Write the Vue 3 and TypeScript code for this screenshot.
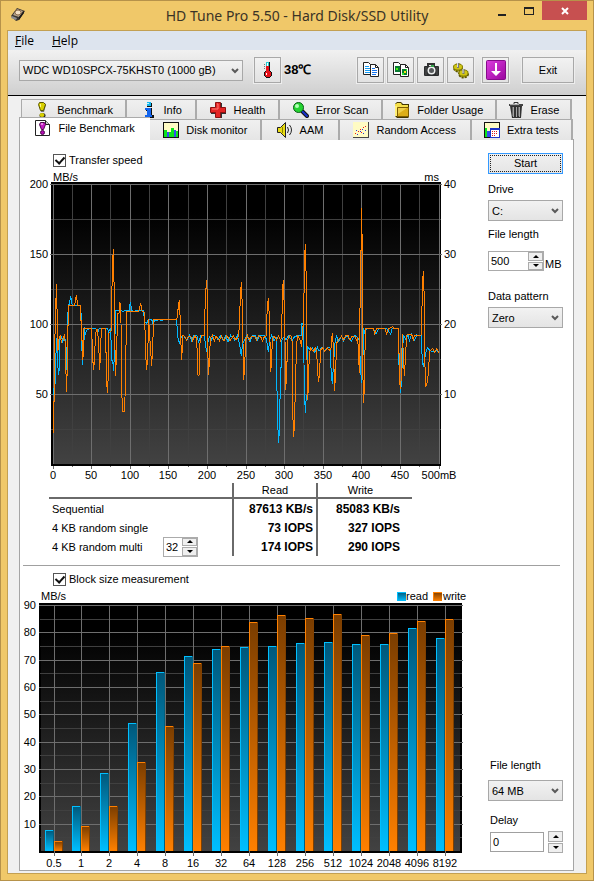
<script setup lang="ts">
import { computed, ref } from 'vue'

type Tab = { id: string; label: string; width: number }

const backTabs: Tab[] = [
  { id: 'bench', label: 'Benchmark', width: 106 },
  { id: 'info', label: 'Info', width: 70 },
  { id: 'health', label: 'Health', width: 83 },
  { id: 'scan', label: 'Error Scan', width: 102 },
  { id: 'folder', label: 'Folder Usage', width: 114 },
  { id: 'erase', label: 'Erase', width: 75 },
]
const frontTabs: Tab[] = [
  { id: 'file', label: 'File Benchmark', width: 131 },
  { id: 'disk', label: 'Disk monitor', width: 112 },
  { id: 'aam', label: 'AAM', width: 77 },
  { id: 'random', label: 'Random Access', width: 132 },
  { id: 'extra', label: 'Extra tests', width: 101 },
]
const tabRows = [backTabs, frontTabs]
const activeTab = ref('file')
const columns = (row: Tab[]) => row.map((t) => `${t.width}fr`).join(' ')

const showTransfer = ref(true)
const showBlocks = ref(true)
const queueDepth = ref('32')
const fileLength = ref('500')
const delay = ref('0')

/* Transfer chart geometry */
const plotX = 33
const plotY = 17
const xTicks = Array.from({ length: 21 }, (_, i) => ({
  x: Math.floor(plotX + i * 19.3),
  major: i % 2 === 0,
  label: i % 2 ? '' : `${i * 25}${i === 20 ? 'mB' : ''}`,
}))
const yTicks = Array.from({ length: 9 }, (_, i) => ({
  y: plotY + i * 35,
  major: i % 2 === 0,
  left: i % 2 || i === 8 ? '' : String(200 - i * 25),
  right: i % 2 || i === 8 ? '' : String(40 - i * 5),
}))

/* Traces are sampled on a grid of three steps per chart pixel. */
const readTrace =
  '100,645 100,630 106,610 109,475 112,490 113,555 116,584 119,555 120,475 124,470 128,486 134,468 138,500 140,570 142,440 145,376 148,372 152,349 157,376 182,376 184,420 187,556 191,500 194,440 195,465 200,450 210,446 228,446 233,458 237,446 263,446 266,455 272,446 275,540 278,540 281,572 283,520 286,436 287,392 305,392 309,395 313,392 327,392 331,366 335,392 345,394 350,391 370,392 374,425 380,430 385,418 395,418 400,435 404,419 410,423 415,419 425,421 430,419 470,419 473,470 478,490 484,470 490,466 500,480 508,466 515,482 522,466 530,466 536,485 543,466 553,466 556,490 560,515 564,485 568,470 574,480 580,466 588,470 594,480 602,466 610,482 617,468 624,486 632,466 644,480 652,466 659,495 662,515 664,527 668,490 674,478 680,466 690,485 696,468 706,466 712,480 718,466 734,466 740,480 745,516 749,480 755,466 762,482 768,470 770,548 772,708 776,788 779,730 781,590 784,550 786,480 792,470 798,480 805,466 816,482 824,470 835,466 844,466 846,430 848,430 850,440 852,550 853,625 856,698 859,645 862,645 863,500 872,512 877,502 884,516 892,502 897,514 905,502 914,512 922,502 930,504 934,583 937,612 940,560 945,490 950,466 955,485 965,468 970,484 980,466 994,484 1003,466 1010,470 1018,480 1022,572 1025,608 1028,570 1031,445 1034,458 1040,446 1060,446 1068,463 1076,446 1100,446 1112,462 1116,446 1134,446 1138,590 1142,638 1145,590 1150,466 1158,480 1164,463 1168,482 1175,463 1184,480 1190,465 1203,466 1207,540 1210,560 1213,545 1217,520 1222,503 1230,512 1240,515 1250,510 1257,518'
const writeTrace =
  '100,758 100,665 103,665 103,510 106,440 109,312 110,365 112,405 114,512 117,478 121,465 124,485 128,475 134,463 137,522 139,635 141,600 142,435 145,435 146,376 164,376 169,345 173,376 182,376 182,420 185,420 187,540 190,525 192,446 215,446 218,535 221,570 223,540 227,458 232,446 236,490 239,570 241,530 244,446 257,446 259,585 262,638 265,585 266,460 274,452 275,380 277,265 280,207 282,305 284,380 284,425 286,587 289,540 293,400 297,400 300,367 303,430 305,610 307,694 314,694 316,610 319,440 320,395 332,393 356,393 362,370 366,393 372,395 374,420 378,540 380,570 383,530 386,418 391,500 395,557 398,500 401,418 470,418 473,403 475,376 478,361 480,405 482,470 485,540 487,500 488,466 495,470 500,480 505,470 512,468 518,482 524,468 530,475 534,585 537,585 540,490 544,468 553,466 556,350 560,300 562,350 563,480 565,585 568,550 571,475 577,466 583,482 588,468 598,482 604,468 612,482 620,466 630,482 640,468 648,480 655,470 658,440 661,350 664,306 667,380 669,490 671,600 674,560 677,478 682,466 688,480 694,468 703,468 710,480 716,468 722,470 728,484 733,470 738,468 742,382 745,354 748,410 751,520 752,575 755,540 757,480 762,468 770,480 776,468 782,482 785,470 787,342 790,300 793,390 795,480 797,630 800,580 803,480 808,466 814,468 817,490 818,695 821,770 824,720 826,620 830,490 833,468 840,480 845,500 848,440 851,440 853,250 856,192 859,310 861,540 863,660 865,620 868,520 872,504 880,515 886,504 890,515 893,580 896,605 899,570 902,510 908,504 915,514 922,504 928,512 934,502 934,490 937,460 940,500 943,600 944,632 946,590 950,490 955,480 965,468 970,480 976,468 984,466 990,480 996,468 1004,468 1010,480 1013,470 1017,555 1019,580 1021,210 1024,210 1025,84 1027,232 1028,560 1031,670 1033,615 1036,460 1037,446 1060,446 1064,462 1070,446 1095,446 1100,462 1105,446 1118,440 1122,446 1136,446 1138,590 1141,628 1144,590 1147,463 1153,587 1156,540 1160,465 1175,463 1180,480 1184,465 1203,465 1205,440 1207,322 1210,273 1213,360 1215,560 1217,622 1222,605 1225,580 1229,515 1238,505 1244,516 1250,507 1257,517'

const results = [
  { name: 'Sequential', read: '87613 KB/s', write: '85083 KB/s' },
  { name: '4 KB random single', read: '73 IOPS', write: '327 IOPS' },
  { name: '4 KB random multi', read: '174 IOPS', write: '290 IOPS', depth: true },
]

/* Block size chart: MB/s per block size in KB */
const blocks: [string, number, number][] = [
  ['0.5', 7.6, 3.6], ['1', 16.6, 9.1], ['2', 28.4, 16.6], ['4', 46.7, 32.4],
  ['8', 65.4, 45.9], ['16', 71.2, 68.7], ['32', 73.8, 74.9], ['64', 74.5, 83.7],
  ['128', 74.9, 86.3], ['256', 76, 85.1], ['512', 76.3, 86.6], ['1024', 75.6, 78.9],
  ['2048', 75.6, 79.7], ['4096', 81.5, 84], ['8192', 77.8, 84.8],
]
const base = 265
const level = (v: number) => Math.round(base - v * 2.733)
const bars = computed(() =>
  blocks.map(([label, read, write], i) => ({
    label,
    x: Math.floor(34 + i * 27.935),
    read: level(read),
    write: level(write),
  })),
)
const levels = Array.from({ length: 18 }, (_, i) => ({
  y: level((i + 1) * 5),
  major: i % 2 === 1,
  label: i % 2 ? String((i + 1) * 5) : '',
}))
</script>

<template>
  <div class="window">
    <header class="titlebar">
      <svg class="app-icon" viewBox="0 0 16 16" width="16" height="16">
        <path d="M1 9 7 1l8 3-6 9-3 1z" fill="#3a3530" />
        <path d="M3 8 7 2l6 2-4 6z" fill="#b9a68e" />
        <ellipse cx="8" cy="5.500" rx="3" ry="2.500" fill="#f3e0c6" stroke="#8a6a4a" />
        <path d="m2 9 5 2-1 2-5-2z" fill="#8d8d90" />
        <path d="m9 10 5-6v2l-5 7z" fill="#1e1b1a" />
      </svg>
      <h1>HD Tune Pro 5.50 - Hard Disk/SSD Utility</h1>
      <div class="captions">
        <button class="cap" aria-label="Minimize"><svg viewBox="0 0 12 12" width="12" height="12"><path d="M2 9h8v2H2z" fill="#222" /></svg></button>
        <button class="cap" aria-label="Maximize"><svg viewBox="0 0 12 12" width="12" height="12"><path d="M1 2h10v8H1zM2 4v5h8V4z" fill="#222" fill-rule="evenodd" /></svg></button>
        <button class="cap close" aria-label="Close"><svg viewBox="0 0 12 12" width="12" height="12"><path d="m3 3 6 6M9 3 3 9" stroke="#fff" stroke-width="2" /></svg></button>
      </div>
    </header>

    <main class="client">
      <nav class="menu">
        <a href="#file"><u>F</u>ile</a>
        <a href="#help"><u>H</u>elp</a>
      </nav>

      <div class="toolbar">
        <div class="combo device">
          <select aria-label="Drive to test"><option>WDC WD10SPCX-75KHST0 (1000 gB)</option></select>
          <svg class="chev" viewBox="0 0 8 6" width="8" height="6"><path d="m1 1 3 3 3-3" /></svg>
        </div>
        <button class="tool" aria-label="Temperature">
          <svg viewBox="0 0 18 18" width="18" height="18" shape-rendering="crispEdges">
            <path d="M7 1h4v9h1v1h1v4h-1v1h-1v1H7v-1H6v-1H5v-4h1v-1h1z" fill="#111" />
            <path d="M7 1h3v9h1v1h1v4h-1v1H7v-1H6v-4h1z" fill="#e8101a" />
            <path d="M7 1h3v4H7z" fill="#26cfd4" />
            <path d="M8 2h1v3H8zM7 12h1v2H7z" fill="#fff" />
            <path d="M5 3h1v1H5zM5 5h1v1H5zM5 7h1v1H5z" fill="#777" />
          </svg>
        </button>
        <strong class="temp">38℃</strong>
        <div class="tools">
          <button class="tool" aria-label="Copy text">
            <svg viewBox="0 0 18 18" width="18" height="18">
              <path d="M1.500 1.500h5l3 3v9h-8z" fill="#fff" stroke="#222" />
              <path d="M3 5.500h4M3 7.500h5M3 9.500h5M3 11.500h5" stroke="#159bf2" />
              <path d="M8.500 3.500h5l3 3v9h-8z" fill="#fff" stroke="#222" />
              <path d="M10 7.500h3M10 9.500h5M10 11.500h5M10 13.500h4" stroke="#1674ee" />
              <path d="M13.500 3.500v3h3" fill="none" stroke="#222" />
            </svg>
          </button>
          <button class="tool" aria-label="Copy screenshot">
            <svg viewBox="0 0 18 18" width="18" height="18">
              <path d="M1.500 1.500h5l3 3v9h-8z" fill="#fff" stroke="#222" />
              <path d="M3 5h5v6H3z" fill="#087b32" /><path d="M4 7h2v2H4z" fill="#4af014" />
              <path d="M8.500 3.500h5l3 3v9h-8z" fill="#fff" stroke="#222" />
              <path d="M10 8h5v6h-5z" fill="#08802f" /><path d="M12 10h2v2h-2z" fill="#ffe51c" /><path d="M10 12h2v2h-2zM14 8h1v2h-1z" fill="#2ce82b" />
              <path d="M13.500 3.500v3h3" fill="none" stroke="#222" />
            </svg>
          </button>
          <button class="tool" aria-label="Save screenshot">
            <svg viewBox="0 0 18 18" width="18" height="18">
              <path d="M6 5V3h6v2" fill="none" stroke="#333" stroke-width="2" />
              <rect x="2" y="5" width="15" height="10" rx="1" fill="#2b2d2e" />
              <path d="M4 6v8M15 6v8" stroke="#555" />
              <circle cx="9.500" cy="9.500" r="4" fill="#eef0f0" /><circle cx="9.500" cy="9.500" r="2.500" fill="#56595b" />
              <path d="M9 4h3v2H9z" fill="#35a44b" />
            </svg>
          </button>
          <button class="tool" aria-label="Options">
            <svg viewBox="0 0 18 18" width="18" height="18">
              <g stroke="#5c5600" stroke-width="1">
                <ellipse cx="6" cy="7" rx="4" ry="3.500" fill="#b8ae08" stroke-width="2" stroke-dasharray="2 1" />
                <ellipse cx="6" cy="6" rx="4.500" ry="3" fill="#d0c614" stroke="#8a8305" />
                <ellipse cx="11.500" cy="13" rx="4.500" ry="3.500" fill="#b8ae08" stroke-width="2" stroke-dasharray="2 1" />
                <ellipse cx="11.500" cy="12" rx="4.500" ry="3" fill="#d0c614" stroke="#8a8305" />
              </g>
              <path d="M6 2v5M11.500 8v5" stroke="#777" stroke-width="2" /><path d="M5.500 2v4M11 8v4" stroke="#ddd" />
            </svg>
          </button>
          <button class="tool minimize" aria-label="Minimize to tray">
            <svg viewBox="0 0 20 20" width="20" height="20">
              <defs><linearGradient id="tray" x1="0" y1="0" x2="1" y2="1"><stop offset="0" stop-color="#dd3ee0" /><stop offset="1" stop-color="#9a069e" /></linearGradient></defs>
              <rect x=".5" y=".5" width="19" height="19" rx="1" fill="url(#tray)" stroke="#850b8a" />
              <path d="M9 3h2v8h4l-5 5-5-5h4z" fill="#fff" />
            </svg>
          </button>
          <button class="exit">Exit</button>
        </div>
      </div>

      <div class="book">
        <div
          v-for="(row, r) in tabRows"
          :key="r"
          class="tabs"
          :class="{ back: r === 0 }"
          role="tablist"
          :style="{ gridTemplateColumns: columns(row) }"
        >
          <button
            v-for="t in row"
            :key="t.id"
            class="tab"
            :class="{ active: t.id === activeTab }"
            role="tab"
            :aria-selected="t.id === activeTab"
            @click="activeTab = t.id"
          >
            <svg viewBox="0 0 16 16" width="16" height="16">
              <g v-if="t.id === 'bench'">
                <path d="M6 1h5l1 2-2 7H7L5 3z" fill="#777" /><path d="M5.500.500h4l2 2-2 6h-3l-2-6z" fill="#d8d000" stroke="#5a5600" />
                <path d="M6.500 2v3" stroke="#fff88a" /><ellipse cx="8.500" cy="13.500" rx="3" ry="2.500" fill="#222" /><ellipse cx="8" cy="13" rx="2.500" ry="2" fill="#d8d000" />
              </g>
              <g v-else-if="t.id === 'info'">
                <path d="M6 1h5v4H6zM5 6h6v7h2v3H5v-3h2V9H5z" fill="#111" />
                <path d="M6 0h4v4H6z" fill="#16b8ee" /><path d="M4 6h6v7h1v2H4v-2h2V8H4z" fill="#1264ee" /><path d="M6 1h2v1H6z" fill="#bdf3ff" />
              </g>
              <g v-else-if="t.id === 'health'">
                <path d="M6 1h6v5h4v6h-4v4H6v-4H1V7h5z" fill="#333" /><path d="M5.500.500h5v5h5v5h-5v5h-5v-5h-5v-5h5z" fill="#e42424" stroke="#8c1111" />
                <path d="M7 2h1v5H2" fill="none" stroke="#ff7b76" />
              </g>
              <g v-else-if="t.id === 'scan'">
                <path d="m9 9 5 5" stroke="#111" stroke-width="4" stroke-linecap="round" /><path d="m9 9 5 5" stroke="#1833c8" stroke-width="2" stroke-linecap="round" />
                <circle cx="5.500" cy="5.500" r="5" fill="#25d432" stroke="#085e14" /><circle cx="4" cy="4" r="2" fill="#b4ffb6" />
              </g>
              <g v-else-if="t.id === 'folder'">
                <path d="M1 2 3 0h4l2 2h6v13l-1 1H3l-2-2z" fill="#413500" /><path d="M1 2h1l1-1h4l1 2h6v3H1z" fill="#f5df4a" />
                <path d="M1 4h2v10H1z" fill="#ffef76" /><path d="M3.500 5.500h11v9h-11z" fill="#dcae18" stroke="#7c5c00" /><path d="M4 6h9L4 12z" fill="#efd04b" />
              </g>
              <g v-else-if="t.id === 'erase'">
                <path d="M2 4h12l-1 12H4z" fill="#333" /><path d="M5.500 5v10M8.500 5v10M11.500 5v10" stroke="#a6a6a6" />
                <path d="M4.500 5v9M10.500 5v9" stroke="#666" /><path d="M1 2h14v2H1z" fill="#444" /><path d="M6 2V.500h4V2" fill="none" stroke="#333" /><path d="M2 2.500h9" stroke="#aaa" />
              </g>
              <g v-else-if="t.id === 'file'">
                <path d="M.500.500h10l4 4v11H.500z" fill="#fff" stroke="#222" /><path d="M10.500.500v4h4" fill="#ccc" stroke="#222" />
                <path d="M5.500 2.500h4l1 2-2 5h-2l-2-5z" fill="#c51ac5" stroke="#4b064b" /><path d="M6 4h2" stroke="#fff" /><circle cx="7.500" cy="12.500" r="2" fill="#b10bb1" stroke="#4b064b" />
              </g>
              <g v-else-if="t.id === 'disk'" shape-rendering="crispEdges">
                <path d="M0 0h16v16H0z" fill="#111" /><path d="M1 1h14v14H1z" fill="#fffbc4" />
                <path d="M1 8h3v7H1zM6 10h2v5H6zM8 6h3v9H8zM13 9h2v6h-2z" fill="#0be51d" /><path d="M4 10h2v5H4zM11 8h2v7h-2z" fill="#374bf0" />
              </g>
              <g v-else-if="t.id === 'aam'">
                <path d="M.500 5.500h3l5-5v15l-5-5h-3z" fill="#e9dc13" stroke="#222" /><path d="M5.500 5v6" stroke="#8b8300" />
                <path d="M10.500 5q2 3 0 6M12.500 3q4 5 0 10" fill="none" stroke="#222" />
              </g>
              <g v-else-if="t.id === 'random'" shape-rendering="crispEdges">
                <path d="M0 0h16v16H0z" fill="#444" /><path d="M0 0h15v15H0z" fill="#fffbc4" />
                <path d="M2 11h1v1H2zM5 9h1v1H5zM8 10h1v1H8zM10 5h1v1h-1zM12 4h1v1h-1zM7 7h1v1H7z" fill="#ef1a1a" />
                <path d="M3 8h1v1H3zM4 12h1v1H4zM7 9h1v1H7zM9 7h1v1H9zM12 8h1v1h-1zM10 11h1v1h-1z" fill="#2635df" />
              </g>
              <g v-else shape-rendering="crispEdges">
                <path d="M0 0h16v16H0z" fill="#111" /><path d="M1 1h14v14H1z" fill="#fffbc4" /><path d="M1 6h2v9H1z" fill="#0be51d" /><path d="M3 9h3v6H3z" fill="#374bf0" />
                <path d="M6 6h10v10H6z" fill="#1f35c8" /><path d="M7 8h8v7H7z" fill="#fff" />
                <path d="M8 9h1v1H8zM10 9h1v1h-1zM12 9h1v1h-1zM8 11h1v1H8zM10 11h1v1h-1zM12 11h1v1h-1zM8 13h1v1H8zM10 13h1v1h-1z" fill="#e01b1b" />
              </g>
            </svg>
            <span>{{ t.label }}</span>
          </button>
        </div>

        <div class="page">
          <section class="panel">
            <div class="graph">
              <label class="check"><input v-model="showTransfer" type="checkbox" />Transfer speed</label>
              <svg class="chart" viewBox="0 0 450 315">
                <defs>
                  <linearGradient id="plot" x1="0" y1="0" x2="0" y2="1"><stop offset=".1" stop-color="#000" /><stop offset="1" stop-color="#424242" /></linearGradient>
                </defs>
                <text x="33" y="14">MB/s</text>
                <text x="419" y="14" text-anchor="end">ms</text>
                <g shape-rendering="crispEdges">
                  <rect x="31" y="15" width="390" height="284" fill="#000" />
                  <rect x="33" y="17" width="386" height="280" fill="url(#plot)" />
                  <rect v-for="t in yTicks.slice(0, 8)" :key="t.y" :x="t.major ? 30 : 31" :y="t.y" :width="t.major ? 392 : 390" height="1" :class="t.major ? 'major' : 'minor'" />
                  <rect v-for="t in xTicks" :key="t.x" :x="t.x" y="17" width="1" height="280" :class="t.major ? 'major' : 'minor'" />
                  <rect v-for="t in xTicks" :key="t.x" :x="t.x" y="299" width="1" :height="t.major ? 3 : 1" class="major" />
                  <rect v-for="t in yTicks.slice(0, 8).filter((k) => k.major)" :key="t.y" x="30" :y="t.y" width="392" height="1" class="major" />
                  <svg v-if="showTransfer" x="0" y="13" width="450" height="300" viewBox="0 0 1350 900">
                    <polyline :points="readTrace" fill="none" stroke="#00b7ff" stroke-width="3" />
                    <polyline :points="writeTrace" fill="none" stroke="#ff8000" stroke-width="3" />
                  </svg>
                </g>
                <text v-for="t in yTicks" :key="t.y" x="28" :y="t.y + 4" text-anchor="end">{{ t.left }}</text>
                <text v-for="t in yTicks" :key="t.y" x="424" :y="t.y + 4">{{ t.right }}</text>
                <text v-for="t in xTicks" :key="t.x" :x="t.x" y="312" text-anchor="middle">{{ t.label }}</text>
              </svg>
              <table class="results">
                <thead>
                  <tr><th class="name"></th><th>Read</th><th>Write</th></tr>
                </thead>
                <tbody>
                  <tr v-for="row in results" :key="row.name">
                    <td class="name">
                      <div class="cell">
                        <span>{{ row.name }}</span>
                        <span v-if="row.depth" class="spin depth">
                          <input v-model="queueDepth" type="text" aria-label="Queue depth" />
                          <span class="steps"><button aria-label="More"><i class="up"></i></button><button aria-label="Less"><i class="down"></i></button></span>
                        </span>
                      </div>
                    </td>
                    <td>{{ row.read }}</td>
                    <td>{{ row.write }}</td>
                  </tr>
                </tbody>
              </table>
            </div>
            <aside class="side">
              <button class="start"><span>Start</span></button>
              <div class="field">
                <label for="drive">Drive</label>
                <div class="combo">
                  <select id="drive"><option>C:</option></select>
                  <svg class="chev" viewBox="0 0 8 6" width="8" height="6"><path d="m1 1 3 3 3-3" /></svg>
                </div>
              </div>
              <div class="field length">
                <label for="len">File length</label>
                <div class="with-unit">
                  <span class="spin">
                    <input id="len" v-model="fileLength" type="text" />
                    <span class="steps"><button aria-label="Longer"><i class="up"></i></button><button aria-label="Shorter"><i class="down"></i></button></span>
                  </span>
                  <span class="unit">MB</span>
                </div>
              </div>
              <div class="field">
                <label for="pattern">Data pattern</label>
                <div class="combo">
                  <select id="pattern"><option>Zero</option></select>
                  <svg class="chev" viewBox="0 0 8 6" width="8" height="6"><path d="m1 1 3 3 3-3" /></svg>
                </div>
              </div>
            </aside>
          </section>

          <hr />

          <section class="panel lower">
            <div class="graph">
              <label class="check"><input v-model="showBlocks" type="checkbox" />Block size measurement</label>
              <svg class="chart" viewBox="0 0 450 283">
                <defs>
                  <linearGradient id="blue" x1="0" y1="0" x2="0" y2="1"><stop offset="0" stop-color="#00577a" /><stop offset="1" stop-color="#00bfff" /></linearGradient>
                  <linearGradient id="orange" x1="0" y1="0" x2="0" y2="1"><stop offset="0" stop-color="#7a3d00" /><stop offset="1" stop-color="#ff8000" /></linearGradient>
                </defs>
                <text x="21" y="14">MB/s</text>
                <g shape-rendering="crispEdges">
                  <rect x="377" y="6" width="9" height="9" fill="url(#blue)" /><path d="M377.500 15V6.500H386" fill="none" stroke="#00bfff" />
                  <rect x="413" y="6" width="9" height="9" fill="url(#orange)" /><path d="M413.500 15V6.500H422" fill="none" stroke="#ff8000" />
                  <rect x="19" y="17" width="423" height="250" fill="#000" />
                  <rect x="21" y="19" width="419" height="246" fill="url(#plot)" />
                  <rect v-for="l in levels" :key="l.y" :x="l.major ? 19 : 20" :y="l.y" :width="l.major ? 424 : 422" height="1" :class="l.major ? 'major' : 'minor'" />
                  <g v-for="b in bars" :key="b.label">
                    <rect :x="b.x" y="19" width="1" height="251" class="major" />
                    <template v-if="showBlocks">
                      <rect :x="b.x - 9" :y="b.read" width="9" :height="base - b.read" fill="url(#blue)" />
                      <path :d="`M${b.x - 9} ${base}V${b.read}h8v1h-7V${base}z`" fill="#00bfff" />
                      <rect :x="b.x - 1" :y="b.read + 1" width="1" :height="base - b.read - 1" fill="#006080" />
                      <rect :x="b.x" :y="b.write" width="9" :height="base - b.write" fill="url(#orange)" />
                      <path :d="`M${b.x} ${base}V${b.write}h8v1h-7V${base}z`" fill="#ff8000" />
                      <rect :x="b.x + 8" :y="b.write + 1" width="1" :height="base - b.write - 1" fill="#804000" />
                    </template>
                  </g>
                </g>
                <text x="386" y="14">read</text>
                <text x="423" y="14">write</text>
                <text v-for="l in levels" :key="l.y" x="16" :y="l.y + 4" text-anchor="end">{{ l.label }}</text>
                <text v-for="b in bars" :key="b.label" :x="b.x" y="281" text-anchor="middle">{{ b.label }}</text>
              </svg>
            </div>
            <aside class="side bottom">
              <div class="field block-length">
                <label for="blen">File length</label>
                <div class="combo">
                  <select id="blen"><option>64 MB</option></select>
                  <svg class="chev" viewBox="0 0 8 6" width="8" height="6"><path d="m1 1 3 3 3-3" /></svg>
                </div>
              </div>
              <div class="field">
                <label for="delay">Delay</label>
                <div class="delay">
                  <input id="delay" v-model="delay" type="text" />
                  <span class="steps"><button aria-label="Longer delay"><i class="up"></i></button><button aria-label="Shorter delay"><i class="down"></i></button></span>
                </div>
              </div>
            </aside>
          </section>
        </div>
      </div>
    </main>
  </div>
</template>

<style>
body {
  margin: 0;
}
</style>

<style scoped>
* {
  box-sizing: border-box;
}
.window {
  font: 11px/14px 'Liberation Sans', sans-serif;
  color: #000;
  background: #f0c869;
  border: 1px solid #b6924a;
  padding: 0 6px 6px;
}
button,
input,
select {
  font: inherit;
  color: inherit;
  margin: 0;
  padding: 0;
  border-radius: 0;
}
svg {
  display: block;
  flex: none;
}
.titlebar {
  display: grid;
  grid-template-columns: 96px 1fr 96px;
  height: 29px;
}
.app-icon {
  margin: 6px 0 0 3px;
}
h1 {
  margin: 0;
  font: 14px/30px 'Noto Sans', sans-serif;
  color: #3a3326;
  text-align: center;
  white-space: nowrap;
  display: flex;
  justify-content: center;
}
.captions {
  display: flex;
  justify-content: flex-end;
}
.cap {
  width: 27px;
  height: 19px;
  border: 0;
  background: none;
  display: flex;
  align-items: center;
  justify-content: center;
  flex: none;
}
.close {
  width: 45px;
  background: #c75050;
}
.client {
  border: 1px solid #c3a052;
  background: #f0f0f0;
}
.menu {
  display: flex;
  gap: 18px;
  height: 19px;
  padding-left: 7px;
  background: #dde4ee;
  font: 12px/20px 'Open Sans', sans-serif;
}
.menu a {
  color: #000;
  text-decoration: none;
}
.toolbar {
  display: flex;
  align-items: center;
  height: 46px;
  padding: 0 12px 5px 11px;
  background: linear-gradient(#f1f1f1, #cfcfcf);
  border-bottom: 1px solid #000;
}
.combo {
  position: relative;
}
.combo select {
  display: block;
  appearance: none;
  width: 100%;
  height: 21px;
  padding-left: 3px;
  border: 1px solid #a8a8a8;
  background: linear-gradient(#f2f2f2, #e4e4e4);
}
.chev {
  position: absolute;
  right: 4px;
  top: 8px;
  pointer-events: none;
}
.chev path {
  fill: none;
  stroke: #5a5a5a;
  stroke-width: 2;
}
.device {
  width: 224px;
}
.tool,
.exit {
  width: 27px;
  height: 26px;
  border: 1px solid #a8a8a8;
  background: linear-gradient(#f2f2f2, #e2e2e2);
  box-shadow: 0 0 0 1px #eee;
  display: flex;
  align-items: center;
  justify-content: center;
}
.device + .tool {
  margin-left: 11px;
}
.temp {
  margin-left: 3px;
  font-size: 13px;
}
.tools {
  display: flex;
  gap: 3px;
  margin-left: auto;
}
.minimize {
  margin-left: 5px;
}
.exit {
  width: 52px;
  margin-left: 10px;
}
.book {
  padding: 3px 12px 2px 11px;
}
.tabs {
  display: grid;
  height: 20px;
  margin-right: 1px;
}
.back {
  margin: 0 2px;
}
.tab {
  display: flex;
  align-items: center;
  justify-content: center;
  gap: 7px;
  border: 1px solid #ababab;
  border-right-width: 2px;
  border-bottom: 0;
  border-left: 0;
  background: linear-gradient(#f0f0f0, #e5e5e5);
  white-space: nowrap;
}
.tab:first-child {
  border-left: 1px solid #ababab;
}
.tab.active {
  position: relative;
  z-index: 1;
  height: 23px;
  margin-top: -2px;
  padding-bottom: 2px;
  background: #fff;
  border-right: 0;
}
.page {
  border: 1px solid #a5a5a5;
  background: #fff;
  padding: 0 10px 0 0;
}
.panel {
  display: flex;
  padding-top: 13px;
}
.graph {
  flex: 1;
  min-width: 0;
  padding-right: 18px;
}
.check {
  display: flex;
  align-items: center;
  gap: 3px;
  height: 14px;
  width: max-content;
  margin-left: 33px;
}
.check input {
  appearance: none;
  width: 13px;
  height: 13px;
  border: 1px solid #555;
  background: #fff;
  display: grid;
  place-items: center;
}
.check input:checked::before {
  content: '';
  width: 4px;
  height: 7px;
  border: solid #111;
  border-width: 0 2px 2px 0;
  transform: translateY(-1px) rotate(42deg);
}
.chart {
  width: 100%;
  height: auto;
  font-size: 11px;
}
.major {
  fill: #6e6e6e;
}
.minor {
  fill: #404040;
}
.results {
  width: 363px;
  margin: 1px 0 0 29px;
  border-collapse: separate;
  border-spacing: 0;
  table-layout: fixed;
}
.results th,
.results td {
  padding: 0 3px 0 0;
  height: 19px;
  border-left: 2px solid #6a6a6a;
  text-align: right;
  font-size: 12px;
  font-weight: bold;
}
.results td:last-child {
  padding-right: 12px;
}
.results th {
  height: 16px;
  padding: 0;
  border-bottom: 2px solid #6a6a6a;
  text-align: center;
  font-size: 11px;
  font-weight: normal;
}
.results th:nth-child(2) {
  width: 84px;
}
.results th:last-child {
  width: 96px;
  padding-right: 9px;
}
.results .name {
  border-left: 0;
  text-align: left;
  font-size: 11px;
  font-weight: normal;
}
.cell {
  display: flex;
  align-items: center;
  height: 19px;
  padding-left: 3px;
}
.spin {
  display: flex;
  width: 56px;
  height: 20px;
  border: 1px solid #ababab;
  background: #fff;
}
.spin input {
  flex: 1;
  min-width: 0;
  border: 0;
  background: none;
  padding-left: 2px;
}
.depth {
  width: 35px;
  margin-left: auto;
  margin-right: 31px;
}
.steps {
  display: grid;
  grid-template-rows: 1fr 1fr;
  gap: 1px;
  width: 15px;
}
.steps button {
  display: grid;
  place-items: center;
  min-height: 0;
  border: 1px solid #ababab;
  background: #efefef;
}
.up,
.down {
  border: solid transparent;
  border-width: 0 3px;
}
.up {
  border-bottom: 3px solid #000;
}
.down {
  border-top: 3px solid #000;
}
.side {
  display: flex;
  flex-direction: column;
  width: 75px;
}
.start {
  height: 21px;
  padding: 1px;
  border: 1px solid #3399ff;
  background: linear-gradient(#f0f0f0, #e5e5e5);
  margin-bottom: 8px;
}
.start span {
  display: block;
  border: 1px dotted #222;
  line-height: 15px;
}
.field {
  display: grid;
  gap: 4px;
  margin-bottom: 6px;
}
.length {
  gap: 10px;
  margin-bottom: 18px;
}
.with-unit {
  display: flex;
  align-items: flex-end;
  gap: 1px;
}
hr {
  border: 0;
  border-top: 1px solid #a0a0a0;
  margin: 9px 3px 0;
}
.lower {
  padding-top: 6px;
  padding-bottom: 1px;
}
.bottom {
  justify-content: flex-end;
  padding-bottom: 10px;
}
.bottom label {
  padding-left: 2px;
}
.block-length {
  gap: 8px;
  margin-bottom: 12px;
}
.delay {
  display: flex;
  align-items: center;
  justify-content: space-between;
  padding-left: 2px;
}
.delay input {
  width: 54px;
  height: 20px;
  border: 1px solid #a0a0a0;
  padding-left: 2px;
}
.delay .steps {
  height: 22px;
}
</style>
